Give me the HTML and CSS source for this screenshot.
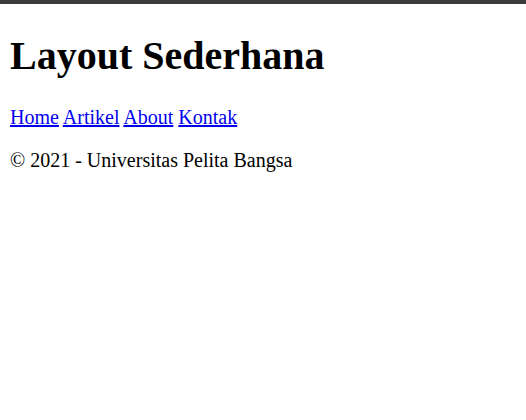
FILE: index.html
```html
<!DOCTYPE html>
<html>
<head>
<meta charset="utf-8">
<title>Layout Sederhana</title>
<link rel="stylesheet" href="styles.css">
</head>
<body>
<div class="topbar"></div>
<div class="page">
  <header class="header">
    <h1 class="title">Layout Sederhana</h1>
  </header>
  <nav class="nav">
    <a href="#" class="nav-link">Home</a>
    <a href="#" class="nav-link">Artikel</a>
    <a href="#" class="nav-link">About</a>
    <a href="#" class="nav-link">Kontak</a>
  </nav>
  <footer class="footer">
    <p class="footer-text">&copy; 2021 - Universitas Pelita Bangsa</p>
  </footer>
</div>
</body>
</html>
```
FILE: styles.css
```css
html, body {
  margin: 0;
  padding: 0;
  background: #fff;
}
body {
  font-family: "Liberation Serif", "Times New Roman", serif;
  font-size: 20px;
  color: #000;
}
.topbar {
  height: 4px;
  background: #3c3c3c;
}
.page {
  padding: 0 10px;
  display: flow-root;
}
.title {
  font-size: 40px;
  line-height: 45px;
  font-weight: bold;
  margin: 29px 0 28px;
}
.nav {
  margin: 0;
  line-height: 23px;
}
.nav-link {
  color: #0000ee;
  text-decoration: underline;
}
.footer-text {
  margin: 20px 0;
  line-height: 23px;
}
```
